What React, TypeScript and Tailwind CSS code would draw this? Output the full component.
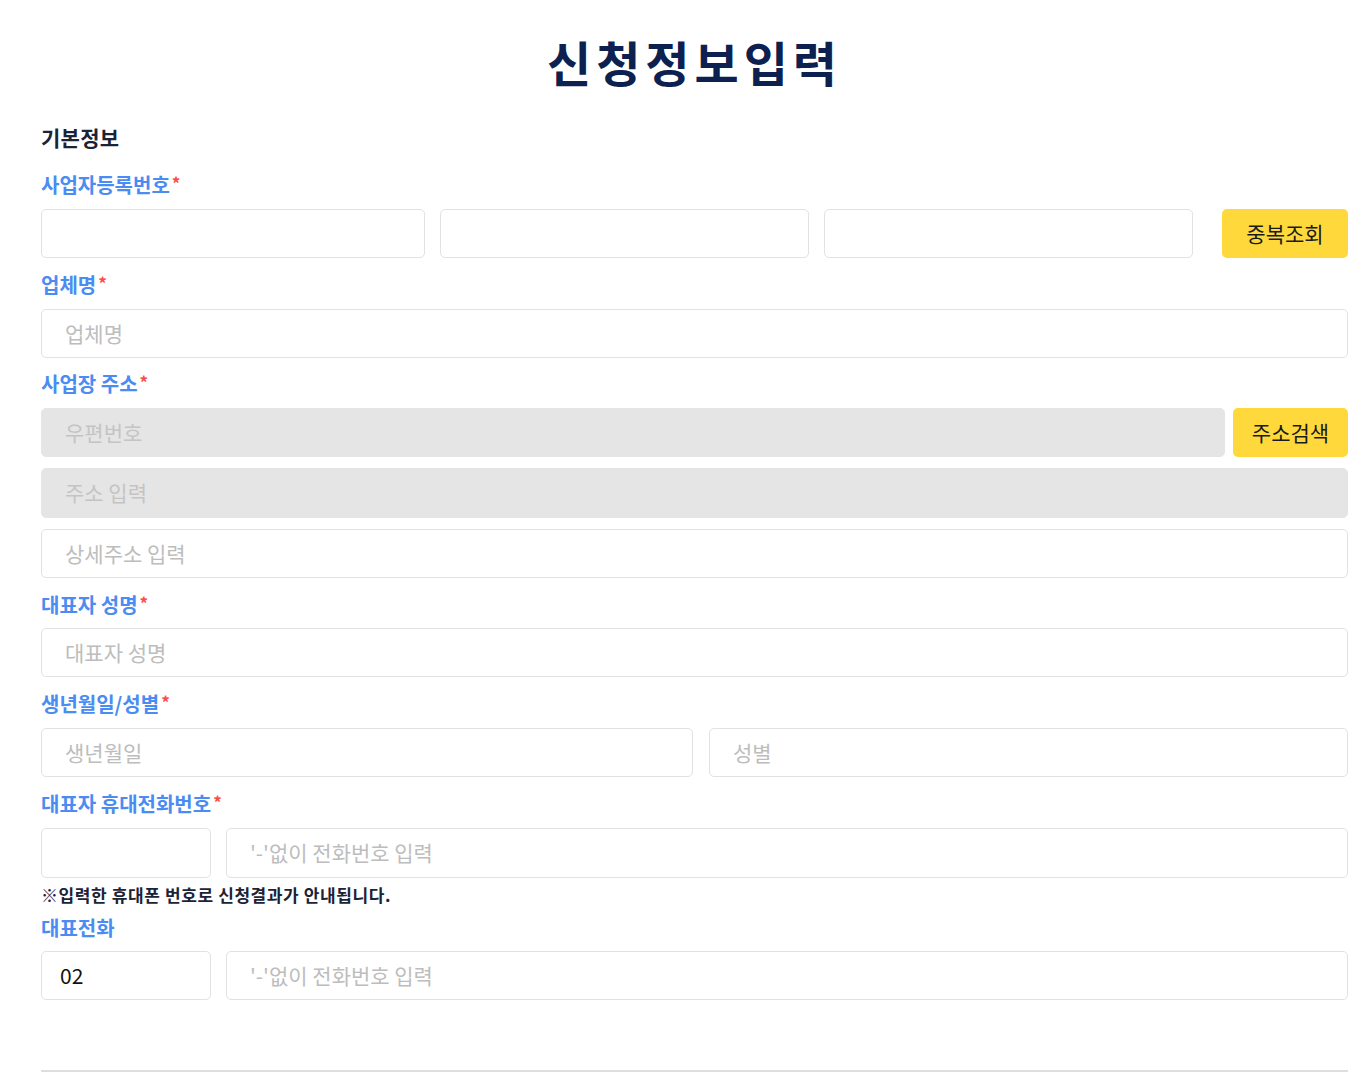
import React from "react";

const font = { fontFamily: '"Noto Sans CJK KR", "Noto Sans", sans-serif' };

function Label({ text, req = true, className = "mt-[15px] mb-[12px]" }: { text: string; req?: boolean; className?: string }) {
  return (
    <div className={"h-[24px] flex items-center text-[20px] font-bold leading-[24px] tracking-[0px] text-[#4a8cf2] " + className}>
      <span>{text}</span>
      {req && <span className="ml-[2px] text-[#ff4a4a] text-[17px] -mt-[4px]">*</span>}
    </div>
  );
}

function Input({
  placeholder = "",
  value,
  gray = false,
  className = "",
}: {
  placeholder?: string;
  value?: string;
  gray?: boolean;
  className?: string;
}) {
  return (
    <div
      className={
        "h-[49px] rounded-[5px] border flex items-center px-[23px] text-[21px] tracking-[0px] " +
        (gray ? "bg-[#e5e5e5] border-[#e5e5e5] " : "bg-white border-[#e2e2e2] ") +
        className
      }
    >
      {value ? (
        <span className="text-[#111] -ml-[5px]">{value}</span>
      ) : (
        <span className={gray ? "text-[#c4c4c4]" : "text-[#bdbdbd]"}>{placeholder}</span>
      )}
    </div>
  );
}

function Btn({ text, className = "" }: { text: string; className?: string }) {
  return (
    <div
      className={
        "h-[49px] rounded-[5px] bg-[#ffd93b] flex items-center justify-center text-[21px] tracking-[0px] text-[#1a1a1a] " +
        className
      }
    >
      {text}
    </div>
  );
}

export default function App() {
  return (
    <div className="min-h-[1084px] bg-white" style={font}>
      <div className="ml-[41px] w-[1307px]">
        <h1 className="pt-[30px] h-[96px] text-center text-[48px] leading-[62px] font-bold tracking-[5px] text-[#0d2150]">
          신청정보입력
        </h1>
        <div className="mt-[29px] h-[24px] text-[21px] leading-[24px] font-bold tracking-[0.3px] text-[#1b2336]">
          기본정보
        </div>
        <Label text="사업자등록번호" className="mt-[24px] mb-[12px]" />
        <div className="flex">
          <Input className="w-[384px] mr-[15px]" />
          <Input className="flex-1 mr-[15px]" />
          <Input className="flex-1 mr-[29px]" />
          <Btn text="중복조회" className="w-[126px]" />
        </div>

        <Label text="업체명" />
        <Input placeholder="업체명" />

        <Label text="사업장 주소" className="mt-[14px] mb-[12px]" />
        <div className="flex gap-[8px]">
          <Input gray placeholder="우편번호" className="flex-1" />
          <Btn text="주소검색" className="w-[115px]" />
        </div>
        <Input gray placeholder="주소 입력" className="mt-[11px] h-[50px]" />
        <Input placeholder="상세주소 입력" className="mt-[11px]" />

        <Label text="대표자 성명" className="mt-[15px] mb-[11px]" />
        <Input placeholder="대표자 성명" />

        <Label text="생년월일/성별" className="mt-[15px] mb-[12px]" />
        <div className="flex gap-[16px]">
          <Input placeholder="생년월일" className="w-[652px]" />
          <Input placeholder="성별" className="flex-1" />
        </div>

        <Label text="대표자 휴대전화번호" className="mt-[15px] mb-[12px]" />
        <div className="flex gap-[15px]">
          <Input className="w-[170px] h-[50px]" />
          <Input placeholder="'-'없이 전화번호 입력" className="flex-1 h-[50px]" />
        </div>
        <div className="mt-[6px] h-[22px] leading-[22px] text-[17px] font-bold tracking-[0.6px] text-[#1b2336]">
          ※입력한 휴대폰 번호로 신청결과가 안내됩니다.
        </div>
        <Label text="대표전화" req={false} className="mt-[10px] mb-[11px]" />
        <div className="flex gap-[15px]">
          <Input value="02" className="w-[170px]" />
          <Input placeholder="'-'없이 전화번호 입력" className="flex-1" />
        </div>
        <div className="mt-[70px] h-[2px] bg-[#dedede]" />
      </div>
    </div>
  );
}
